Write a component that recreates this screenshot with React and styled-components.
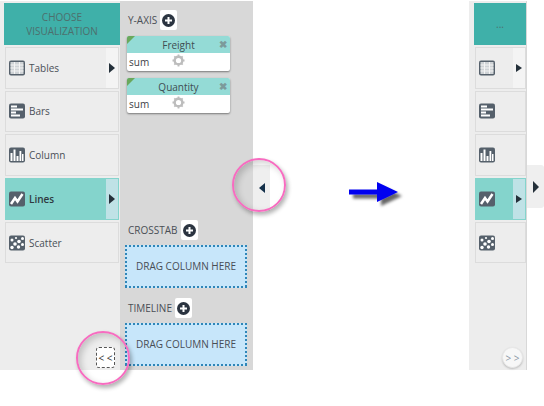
import React from "react";
import styled, { createGlobalStyle } from "styled-components";

const GlobalStyle = createGlobalStyle`
  html, body {
    margin: 0;
    padding: 0;
    background: #fff;
  }
  * {
    box-sizing: border-box;
  }
`;

const Page = styled.div`
  position: relative;
  display: flex;
  width: 544px;
  height: 406px;
  overflow: hidden;
  font-family: "Open Sans", "Liberation Sans", sans-serif;
  color: #4a5058;
`;

const Shot = styled.div`
  display: flex;
  height: 369px;
  margin-top: 1px;
`;

const Sidebar = styled.div`
  display: flex;
  flex-direction: column;
  width: ${(p) => (p.$slim ? "58px" : "120px")};
  padding: 2px 0 2px ${(p) => (p.$slim ? "5px" : "4px")};
  background: #ededed;
  border-right: ${(p) => (p.$slim ? "1px solid #d8d8d8" : "0")};
`;

const Header = styled.div`
  display: flex;
  align-items: center;
  justify-content: center;
  height: 42px;
  margin-bottom: 2px;
  text-align: center;
  font-size: 10px;
  line-height: 14px;
  color: #4d6f6d;
  background: #3fb0a9;
`;

const Items = styled.div`
  display: flex;
  flex-direction: column;
  gap: 2.2px;
  padding: 0 ${(p) => (p.$slim ? "0" : "1px")} 0 1px;
`;

const Item = styled.div`
  display: flex;
  align-items: center;
  height: 41.5px;
  padding-left: 3px;
  font-size: 10px;
  color: ${(p) => (p.$active ? "#2f3a40" : "#4a5058")};
  font-weight: ${(p) => (p.$active ? 600 : 400)};
  background: ${(p) => (p.$active ? "#84d4cc" : "#ededed")};
  border: 1px solid ${(p) => (p.$active ? "#84d4cc" : "#dcdcdc")};
`;

const ItemLabel = styled.span`
  margin-left: 4px;
`;

const Expander = styled.span`
  display: flex;
  align-items: center;
  justify-content: center;
  align-self: stretch;
  width: 12px;
  margin-left: auto;
  background: ${(p) => (p.$active ? "#bfe2e6" : "#f4f4f4")};
`;

const Triangle = styled.span`
  width: 0;
  height: 0;
  border-top: ${(p) => p.$size}px solid transparent;
  border-bottom: ${(p) => p.$size}px solid transparent;
  border-left: ${(p) => (p.$left ? "0" : `6px solid #24303a`)};
  border-right: ${(p) => (p.$left ? `6px solid #14304a` : "0")};
`;

const CollapseButton = styled.button`
  align-self: flex-end;
  display: flex;
  align-items: center;
  justify-content: center;
  width: 19px;
  height: 21px;
  margin: auto 5px 0 0;
  padding: 0;
  font-family: inherit;
  font-size: 10px;
  color: #333;
  background: #fff;
  border: 1px dashed #555;
  border-radius: 3px;
`;

const RoundButton = styled.button`
  align-self: flex-end;
  width: 21px;
  height: 21px;
  margin: auto 3px 0 0;
  padding: 0;
  font-family: inherit;
  font-size: 10px;
  color: #8a97a5;
  background: #f7f7f7;
  border: 1px solid #e8e8e8;
  border-radius: 50%;
  box-shadow: 0 1px 2px rgba(0, 0, 0, 0.2);
`;

const DropPanel = styled.div`
  display: flex;
  flex-direction: column;
  width: 133px;
  padding: 9px 6px 4px 5px;
  background: #d8d8d8;
`;

const SectionTitle = styled.div`
  display: flex;
  align-items: center;
  gap: 3px;
  height: 20px;
  margin: ${(p) => p.$top || 0}px 0 0 3px;
  font-size: 10px;
  color: #4a4f55;
`;

const AddButton = styled.span`
  display: flex;
  align-items: center;
  justify-content: center;
  width: 17px;
  height: 20px;
  background: #fff;
  border-radius: 2px;
`;

const Card = styled.div`
  position: relative;
  width: 103px;
  height: 35px;
  margin: ${(p) => p.$top}px 0 0 2px;
  font-size: 10px;
  background: #fff;
  border-radius: 2px;
  box-shadow: 0 1px 2px rgba(0, 0, 0, 0.45);
  overflow: hidden;
`;

const CardHead = styled.div`
  height: 17px;
  line-height: 18px;
  text-align: center;
  color: #3f4d52;
  background: #94dbd6;
`;

const Corner = styled.span`
  position: absolute;
  top: 0;
  left: 0;
  border-top: 8px solid #6aa85c;
  border-right: 8px solid transparent;
`;

const Close = styled.span`
  position: absolute;
  top: 3px;
  right: 3px;
  font-size: 10px;
  font-weight: 700;
  line-height: 10px;
  color: #7c9a9a;
`;

const CardBody = styled.div`
  display: flex;
  align-items: center;
  height: 18px;
  padding-left: 2px;
  color: #3c4146;
`;

const Gear = styled.svg`
  margin-left: 23px;
  margin-top: -3px;
`;

const DropZone = styled.div`
  display: flex;
  align-items: center;
  justify-content: center;
  width: 122px;
  height: 43px;
  margin-top: ${(p) => p.$top}px;
  padding-bottom: 2px;
  font-size: 10px;
  color: #474d55;
  background:
    linear-gradient(to right, #2f86b8 50%, transparent 50%) top left / 4px 2px repeat-x,
    linear-gradient(to right, #2f86b8 50%, transparent 50%) bottom left / 4px 2px repeat-x,
    linear-gradient(to bottom, #2f86b8 50%, transparent 50%) top left / 2px 4px repeat-y,
    linear-gradient(to bottom, #2f86b8 50%, transparent 50%) top right / 2px 4px repeat-y,
    #c7e6fa;
`;

const SideTab = styled.div`
  display: flex;
  align-items: center;
  justify-content: center;
  align-self: flex-start;
  width: 17px;
  height: ${(p) => p.$height}px;
  margin-top: 165px;
  background: #efefef;
  border-radius: ${(p) => (p.$flush ? "0" : "0 3px 3px 0")};
`;

const ArrowSlot = styled.div`
  width: 199px;
  padding: 179px 0 0 79px;
`;

const Ring = styled.div`
  position: absolute;
  left: ${(p) => p.$x}px;
  top: ${(p) => p.$y}px;
  width: 54px;
  height: 54px;
  border: 2px solid #f76cc0;
  border-radius: 50%;
  box-shadow: 2px 3px 4px rgba(0, 0, 0, 0.3), inset 3px 3px 6px rgba(0, 0, 0, 0.18);
`;

const Glyph = styled.svg`
  display: block;
  flex: none;
`;

const ICON = "#55606b";

function TableIcon() {
  return (
    <Glyph width="16" height="16" viewBox="0 0 16 16">
      <rect x="0" y="0.5" width="16" height="15" rx="2" fill={ICON} />
      <rect x="1.500" y="2" width="13" height="12" fill="#cfd3d6" />
      <path d="M1.500 5h13M1.500 8h13M1.500 11h13M5.500 2v12M10.500 2v12" stroke="#f4f4f4" strokeWidth="1" />
    </Glyph>
  );
}

function BarsIcon() {
  return (
    <Glyph width="16" height="16" viewBox="0 0 16 16">
      <rect x="0" y="0.5" width="16" height="15" rx="2" fill={ICON} />
      <path d="M2 2.500h6v2H2zM2 5.500h12v2H2zM2 8.500h5v2H2zM2 11.500h9v2H2z" fill="#fff" />
    </Glyph>
  );
}

function ColumnIcon() {
  return (
    <Glyph width="16" height="16" viewBox="0 0 16 16">
      <rect x="0" y="0.5" width="16" height="15" rx="2" fill={ICON} />
      <path d="M1.500 6h2v8h-2zM4.500 2.500h2V14h-2zM7.500 9h2v5h-2zM10.500 4h1.800v10h-1.800zM13 7h1.500v7H13z" fill="#fff" />
    </Glyph>
  );
}

function LinesIcon() {
  return (
    <Glyph width="16" height="16" viewBox="0 0 16 16">
      <rect x="0" y="0.5" width="16" height="15" rx="2" fill={ICON} />
      <path d="M2 13L6 7l2.500 3.500L13.500 3" fill="none" stroke="#fff" strokeWidth="2.500" />
    </Glyph>
  );
}

function ScatterIcon() {
  return (
    <Glyph width="16" height="16" viewBox="0 0 16 16">
      <rect x="0" y="0.5" width="16" height="15" rx="2" fill={ICON} />
      <g fill="#fff">
        <circle cx="3" cy="12.500" r="1.700" />
        <circle cx="6" cy="9" r="1.800" />
        <circle cx="3" cy="5" r="1.500" />
        <circle cx="9.500" cy="12" r="1.700" />
        <circle cx="10" cy="6.500" r="1.800" />
        <circle cx="13.500" cy="3.500" r="1.500" />
        <circle cx="13.500" cy="9.500" r="1.500" />
        <circle cx="7" cy="3" r="1.100" />
      </g>
    </Glyph>
  );
}

function PlusIcon() {
  return (
    <Glyph width="13" height="13" viewBox="0 0 13 13">
      <circle cx="6.500" cy="6.500" r="6.500" fill="#2b3440" />
      <path d="M6.500 3v7M3 6.500h7" stroke="#fff" strokeWidth="2" />
    </Glyph>
  );
}

function GearIcon() {
  return (
    <Gear width="13" height="13" viewBox="0 0 13 13">
      <circle cx="6.500" cy="6.500" r="3.800" fill="none" stroke="#bdbdbd" strokeWidth="2.400" />
      <path
        d="M6.500 0.500v2M6.500 10.500v2M0.500 6.500h2M10.500 6.500h2M2.300 2.300l1.400 1.400M9.300 9.300l1.400 1.400M2.300 10.700l1.400-1.400M9.300 3.700l1.400-1.400"
        stroke="#bdbdbd"
        strokeWidth="1.800"
      />
    </Gear>
  );
}

const VIEWS = [
  { name: "Tables", Icon: TableIcon, expand: true },
  { name: "Bars", Icon: BarsIcon },
  { name: "Column", Icon: ColumnIcon },
  { name: "Lines", Icon: LinesIcon, expand: true, active: true },
  { name: "Scatter", Icon: ScatterIcon },
];

function Measure({ name }) {
  return (
    <Card $top={name === "Freight" ? 6 : 7}>
      <CardHead>{name}</CardHead>
      <Corner />
      <Close>✖</Close>
      <CardBody>
        sum
        <GearIcon />
      </CardBody>
    </Card>
  );
}

export default function App() {
  return (
    <Page>
      <GlobalStyle />
      <Shot>
        <Sidebar>
          <Header>
            CHOOSE
            <br />
            VISUALIZATION
          </Header>
          <Items>
            {VIEWS.map(({ name, Icon, expand, active }) => (
              <Item key={name} $active={active}>
                <Icon />
                <ItemLabel>{name}</ItemLabel>
                {expand && (
                  <Expander $active={active}>
                    <Triangle $size={5} />
                  </Expander>
                )}
              </Item>
            ))}
          </Items>
          <CollapseButton>&lt; &lt;</CollapseButton>
        </Sidebar>
        <DropPanel>
          <SectionTitle>
            Y-AXIS
            <AddButton>
              <PlusIcon />
            </AddButton>
          </SectionTitle>
          <Measure name="Freight" />
          <Measure name="Quantity" />
          <SectionTitle $top={107}>
            CROSSTAB
            <AddButton>
              <PlusIcon />
            </AddButton>
          </SectionTitle>
          <DropZone $top={5}>DRAG COLUMN HERE</DropZone>
          <SectionTitle $top={10}>
            TIMELINE
            <AddButton>
              <PlusIcon />
            </AddButton>
          </SectionTitle>
          <DropZone $top={5}>DRAG COLUMN HERE</DropZone>
        </DropPanel>
      </Shot>
      <SideTab $flush $height={46}>
        <Triangle $size={5} $left />
      </SideTab>
      <ArrowSlot>
        <Glyph width="56" height="30" viewBox="0 0 56 30">
          <defs>
            <filter id="arrowShadow" x="-20%" y="-40%" width="150%" height="200%">
              <feDropShadow dx="4" dy="4" stdDeviation="1.500" floodColor="#000" floodOpacity="0.6" />
            </filter>
          </defs>
          <path d="M0 10.500h28V3l21 10-21 10v-7.500H0z" fill="#0000f0" filter="url(#arrowShadow)" />
        </Glyph>
      </ArrowSlot>
      <Shot>
        <Sidebar $slim>
          <Header>...</Header>
          <Items $slim>
            {VIEWS.map(({ name, Icon, expand, active }) => (
              <Item key={name} $active={active}>
                <Icon />
                {expand && (
                  <Expander $active={active}>
                    <Triangle $size={4} />
                  </Expander>
                )}
              </Item>
            ))}
          </Items>
          <RoundButton>&gt; &gt;</RoundButton>
        </Sidebar>
      </Shot>
      <SideTab $height={43}>
        <Triangle $size={6} />
      </SideTab>
      <Ring $x={232} $y={158} />
      <Ring $x={76} $y={331} />
    </Page>
  );
}
